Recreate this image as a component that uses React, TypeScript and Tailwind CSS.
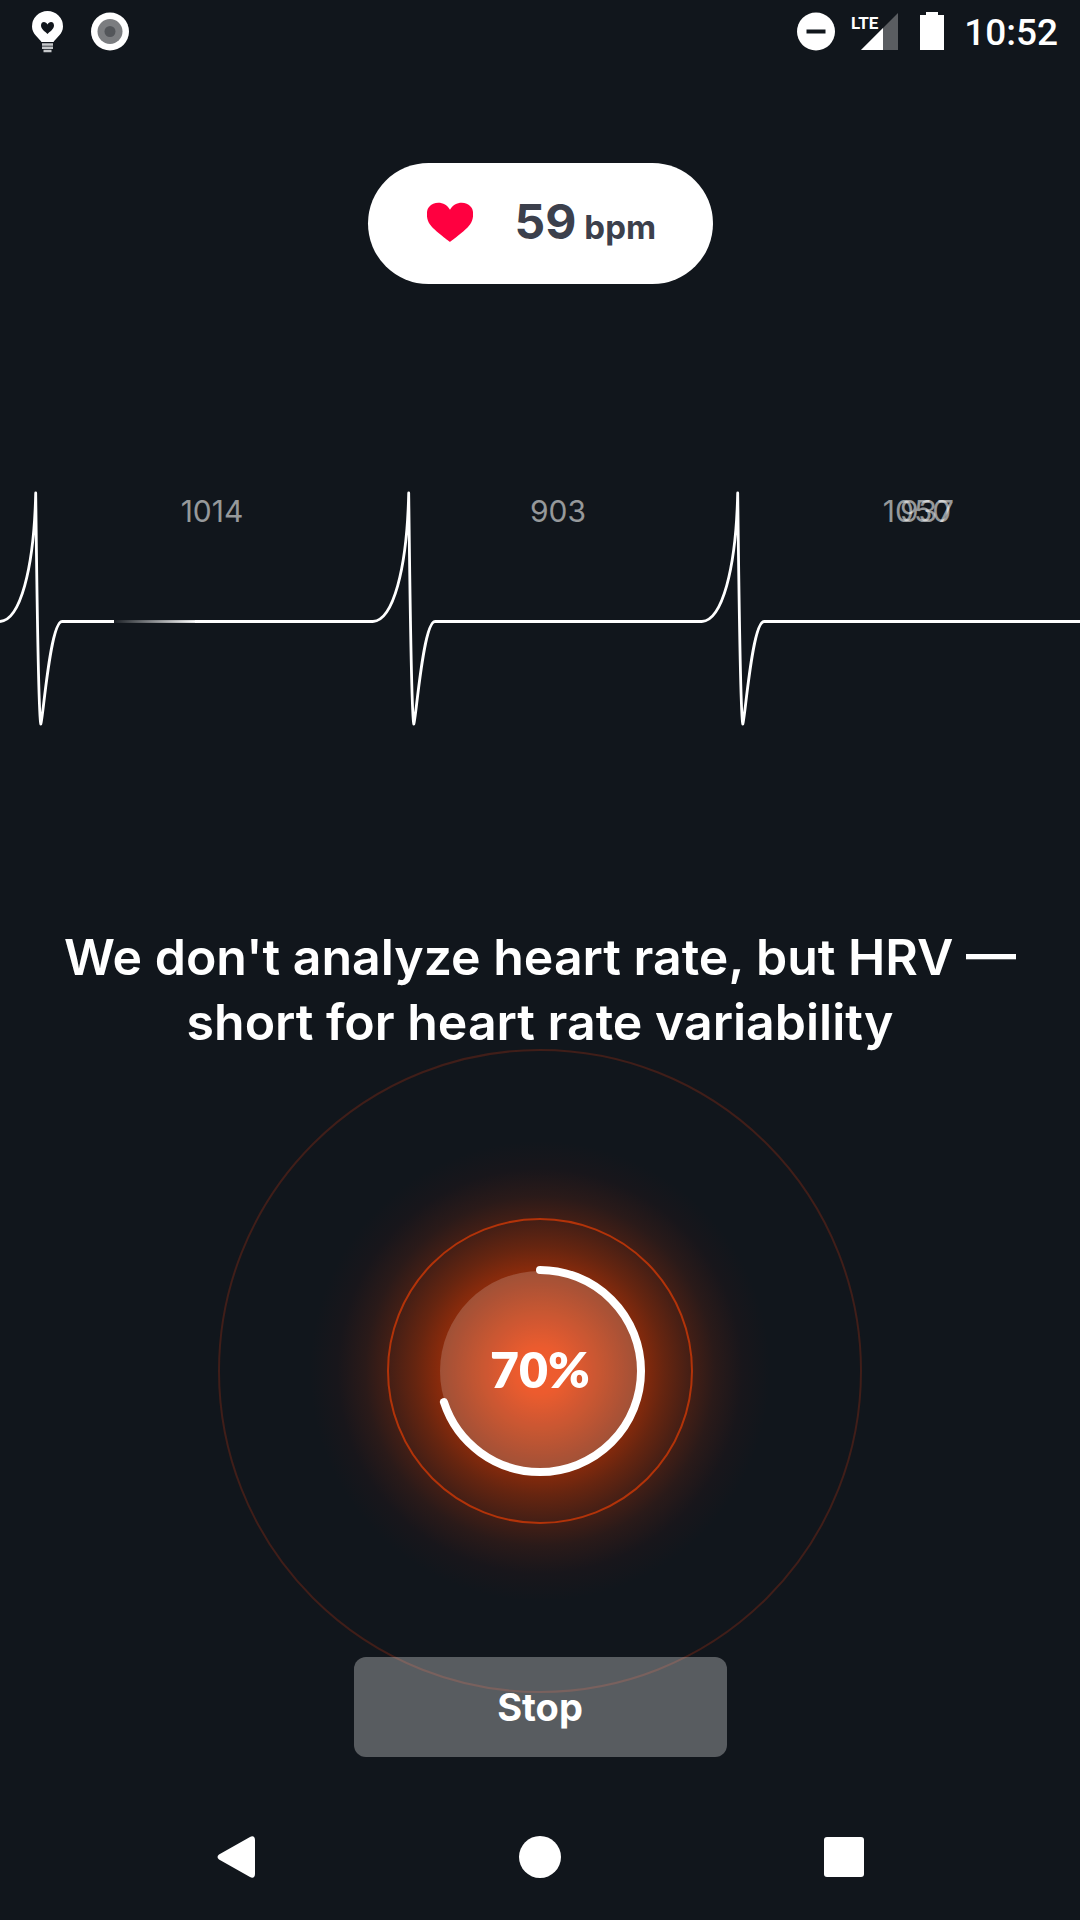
const HEART =
  'M23 41 C21 39 8 30 3 23 C-1 18 -1 8 2 5 C8 -2 19 0 23 8 C27 0 38 -2 44 5 C47 8 47 18 43 23 C38 30 25 39 23 41 Z'

function StatusBar() {
  return (
    <header className="flex h-16 items-start justify-between pt-2 pr-[22px] pl-8 font-[Roboto,sans-serif]">
      <div className="flex gap-7">
        <svg width="31" height="48" viewBox="0 0 31 48" role="img" aria-label="Health tip">
          <path
            d="M15.500 3 A15.500 15.500 0 0 0 0 18.500 C0 26 7 30 9.500 34 H21.500 C24 30 31 26 31 18.500 A15.500 15.500 0 0 0 15.500 3 Z"
            fill="#fff"
          />
          <path
            d="M15.500 26 C13 23.500 9 21 9 17.500 C9 13 14 13 15.500 16.500 C17 13 22 13 22 17.500 C22 21 18 23.500 15.500 26 Z"
            fill="#11161c"
          />
          <path d="M10 36.500 H21 M10 39.800 H21 M11.500 43 H19.500" stroke="#c6c8ca" strokeWidth="2.400" />
        </svg>
        <svg width="38" height="48" viewBox="0 0 38 48" role="img" aria-label="Recording">
          <circle cx="19" cy="23.500" r="19" fill="#fff" />
          <circle cx="19" cy="23.500" r="12.500" fill="#7b7d80" />
          <circle cx="19" cy="23.500" r="5.500" fill="#53565a" />
        </svg>
      </div>
      <div className="flex">
        <svg width="38" height="48" viewBox="0 0 38 48" role="img" aria-label="Do not disturb">
          <circle cx="19" cy="23.500" r="19" fill="#fff" />
          <rect x="9.500" y="21.500" width="19" height="4" fill="#11161c" />
        </svg>
        <svg className="ml-4" width="47" height="48" viewBox="0 0 47 48" role="img" aria-label="LTE signal">
          <path d="M10 42 L47 5 V42 Z" fill="#5a5d61" />
          <path d="M10 42 L32 20 V42 Z" fill="#fff" />
          <text x="0" y="21" fill="#fff" fontSize="17" fontWeight="700">
            LTE
          </text>
        </svg>
        <svg className="ml-[22px]" width="24" height="48" viewBox="0 0 24 48" role="img" aria-label="Battery full">
          <path d="M6 4 H18 V7 H24 V42 H0 V7 H6 Z" fill="#fff" />
        </svg>
        <time className="ml-5 text-[37px] leading-[50px] font-medium">10:52</time>
      </div>
    </header>
  )
}

function HeartRate() {
  return (
    <div className="mt-[99px] flex h-[121px] w-[345px] items-center self-center rounded-full bg-white pb-1 pl-[59px] text-[#3c404c]">
      <svg width="46" height="40" viewBox="0 0 46 41" preserveAspectRatio="none" aria-hidden="true">
        <path d={HEART} fill="#ff0040" />
      </svg>
      <p className="ml-[42px] flex items-baseline gap-2 leading-none font-bold">
        <span className="text-[48px]">59</span>
        <span className="text-[33px]">bpm</span>
      </p>
    </div>
  )
}

const beat = (x: number) =>
  `M${x} 151.500 C${x + 20} 150 ${x + 34} 100 ${x + 35.7} 23 C${x + 36.5} 80 ${x + 38} 245 ${x + 40.8} 254 C${x + 43} 250 ${x + 50} 152 ${x + 62} 151.500`

const intervals = [
  { x: 212, value: 1014 },
  { x: 558, value: 903 },
  { x: 917, value: 1050 },
  { x: 927, value: 937 },
]

function Pulse() {
  return (
    <svg className="mt-[186px] h-auto w-full" viewBox="0 0 1080 280" role="img" aria-label="Pulse wave">
      <defs>
        <linearGradient id="tail" gradientUnits="userSpaceOnUse" x1="114" x2="195" y1="0" y2="0">
          <stop offset="0" stopColor="#fff" stopOpacity="0.05" />
          <stop offset="1" stopColor="#fff" />
        </linearGradient>
      </defs>
      <g fill="none" stroke="#fff" strokeWidth="2.800" strokeLinejoin="round">
        <path d={beat(0)} />
        <path d={beat(373)} />
        <path d={beat(702)} />
        <path d="M62 151.500 H114 M195 151.500 H373 M435 151.500 H702 M764 151.500 H1080" />
      </g>
      <rect x="114" y="150.100" width="81" height="2.800" fill="url(#tail)" />
      <g
        className="font-[Inter,sans-serif]"
        fill="#fff"
        fillOpacity="0.56"
        fontSize="30"
        textAnchor="middle"
      >
        {intervals.map(({ x, value }) => (
          <text key={value} x={x} y="52">
            {value}
          </text>
        ))}
      </g>
    </svg>
  )
}

function Progress({ percent }: { percent: number }) {
  return (
    <div className="-mt-[6px] grid place-items-center self-center">
      <svg className="col-start-1 row-start-1" width="644" height="644" viewBox="0 0 644 644" aria-hidden="true">
        <defs>
          <radialGradient id="glow" gradientUnits="userSpaceOnUse" cx="322" cy="322" r="230">
            <stop offset="0" stopColor="#ee3900" />
            <stop offset="0.100" stopColor="#e83801" />
            <stop offset="0.430" stopColor="#8c2b0b" />
            <stop offset="0.540" stopColor="#662510" />
            <stop offset="0.650" stopColor="#461f15" />
            <stop offset="0.760" stopColor="#2a1a19" />
            <stop offset="0.880" stopColor="#18161b" />
            <stop offset="1" stopColor="#11161c" />
          </radialGradient>
        </defs>
        <circle cx="322" cy="322" r="230" fill="url(#glow)" />
        <circle cx="322" cy="322" r="100" fill="#fff" fillOpacity="0.180" />
        <circle cx="322" cy="322" r="152" fill="none" stroke="#b23309" strokeWidth="2" />
        <circle cx="322" cy="322" r="321" fill="none" stroke="#401e19" strokeWidth="2" />
        <circle
          cx="322"
          cy="322"
          r="101"
          fill="none"
          stroke="#fff"
          strokeWidth="8"
          strokeLinecap="round"
          pathLength="100"
          strokeDasharray={`${percent} 100`}
          transform="rotate(-90 322 322)"
        />
      </svg>
      <span className="col-start-1 row-start-1 pb-1 font-[Lato,sans-serif] text-[50px] leading-none font-extrabold">
        {percent}%
      </span>
    </div>
  )
}

function NavBar() {
  return (
    <nav className="mt-auto grid h-[126px] grid-cols-3 px-21">
      <button type="button" aria-label="Back" className="grid place-items-center">
        <svg width="38" height="42" viewBox="0 0 38 42">
          <path
            d="M33 1 C36 -1 38 1 38 4 V38 C38 41 36 43 33 41 L2 23.500 C0 22 0 20 2 18.500 Z"
            fill="#fff"
          />
        </svg>
      </button>
      <button type="button" aria-label="Home" className="grid place-items-center">
        <span className="size-[42px] rounded-full bg-white" />
      </button>
      <button type="button" aria-label="Recent apps" className="grid place-items-center">
        <span className="size-10 rounded-[3px] bg-white" />
      </button>
    </nav>
  )
}

export default function App() {
  return (
    <div className="flex min-h-screen flex-col overflow-hidden bg-[#11161c] font-[Inter,sans-serif] text-white">
      <StatusBar />
      <main className="flex flex-col">
        <HeartRate />
        <Pulse />
        <h1 className="mt-[175px] px-10 text-center text-[50px] leading-[65px] font-semibold">
          We don't analyze heart rate, but HRV — short for heart rate variability
        </h1>
        <Progress percent={70} />
        <button
          type="button"
          className="relative -mt-9 h-[100px] w-[373px] self-center rounded-xl bg-white/30 text-[38px] font-bold"
        >
          Stop
        </button>
      </main>
      <NavBar />
    </div>
  )
}
